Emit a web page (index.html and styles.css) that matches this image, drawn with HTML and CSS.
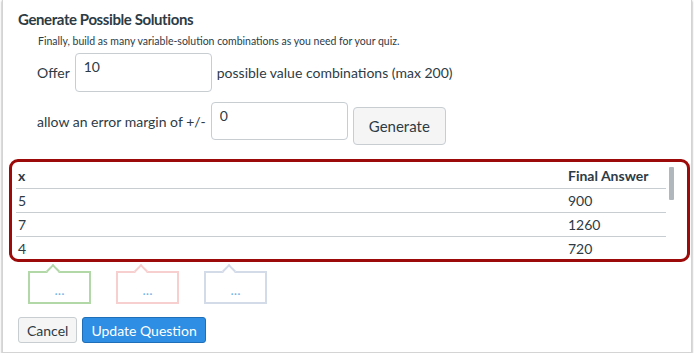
FILE: index.html
```html
<!DOCTYPE html>
<html lang="en">
<head>
    <meta charset="UTF-8">
    <title>Generate Possible Solutions</title>
    <link rel="stylesheet" href="styles.css">
</head>
<body>
    <div class="panel">
        <h2 class="title">Generate Possible Solutions</h2>
        <p class="hint">Finally, build as many variable-solution combinations as you need for your quiz.</p>

        <div class="form-row">
            <span class="label">Offer</span>
            <input class="field" type="text" value="10">
            <span class="label">possible value combinations (max 200)</span>
        </div>

        <div class="form-row second">
            <span class="label">allow an error margin of +/-</span>
            <input class="field" type="text" value="0">
            <button class="btn">Generate</button>
        </div>

        <div class="highlight">
            <div class="table-wrap">
                <table>
                    <thead>
                        <tr><th>x</th><th class="answer">Final Answer</th></tr>
                    </thead>
                    <tbody>
                        <tr><td>5</td><td class="answer">900</td></tr>
                        <tr><td>7</td><td class="answer">1260</td></tr>
                        <tr><td>4</td><td class="answer">720</td></tr>
                    </tbody>
                </table>
                <div class="scrollbar"></div>
            </div>
        </div>

        <div class="callouts">
            <div class="callout green">...</div>
            <div class="callout pink">...</div>
            <div class="callout blue">...</div>
        </div>

        <div class="actions">
            <button class="btn small">Cancel</button>
            <button class="btn small primary">Update Question</button>
        </div>
    </div>
</body>
</html>
```

FILE: styles.css
```css
body {
    margin: 0;
    background: #fff;
    font-family: Lato, 'Liberation Sans', sans-serif;
    color: #2d3b45;
}

.panel {
    margin: 0 2px;
    height: 353px;
    box-sizing: border-box;
    border: 1px solid #d4d4d4;
    border-top: 0;
    box-shadow: 0 1px 2px rgba(0,0,0,0.45);
    padding: 8px 0 0 0;
}

.title {
    margin: 0 0 0 15px;
    font-size: 15px;
    letter-spacing: -0.4px;
    font-weight: 700;
    line-height: 22px;
}

.hint {
    margin: 4px 0 0 35px;
    font-size: 10.5px;
    line-height: 14px;
}

.form-row {
    display: flex;
    align-items: flex-start;
    gap: 5px;
    margin: 5px 0 0 34px;
    font-size: 14px;
}

.form-row.second {
    margin-top: 9px;
}

.label {
    line-height: 40px;
}

.field {
    width: 137px;
    height: 39px;
    box-sizing: border-box;
    border: 1px solid #c7cdd1;
    border-radius: 4px;
    padding: 0 8px 12px;
    font-family: inherit;
    font-size: 14px;
    color: #2d3b45;
}

.second .field {
    height: 38px;
}

.btn {
    font-family: inherit;
    font-size: 15px;
    color: #2d3b45;
    background: #f5f5f5;
    border: 1px solid #c7cdd1;
    border-radius: 4px;
    height: 38px;
    padding: 0 15px;
    margin-top: 5px;
}

.highlight {
    margin: 14px 1px 0 6px;
    border: 3px solid #9c0a0a;
    border-radius: 9px;
    padding: 1px 13px 0 4px;
    box-sizing: border-box;
    height: 103px;
    overflow: hidden;
}

.table-wrap {
    display: flex;
    gap: 3px;
}

table {
    flex: 1;
    border-collapse: collapse;
    font-size: 14px;
}

th, td {
    text-align: left;
    padding: 0 2px;
    height: 23px;
    border-bottom: 1px solid #c7cdd1;
}

th {
    font-weight: 700;
    height: 25px;
}

td {
    font-weight: 400;
}

tbody tr:last-child td {
    border-bottom: 0;
}

.answer {
    width: 96px;
}

.scrollbar {
    width: 5px;
    height: 33px;
    margin-top: 4px;
    background: #b1b8bd;
    border-radius: 1px;
}

.callouts {
    display: flex;
    gap: 25px;
    margin: 9px 0 0 25px;
}

.callout {
    position: relative;
    width: 63px;
    height: 33px;
    box-sizing: border-box;
    border: 2px solid;
    background: #fff;
    color: #74b5e8;
    font-size: 14px;
    text-align: center;
    line-height: 34px;
}

.callout::before {
    content: "";
    position: absolute;
    top: -7px;
    left: 18px;
    width: 8px;
    height: 8px;
    background: #fff;
    border-top: 2px solid;
    border-left: 2px solid;
    border-color: inherit;
    transform: rotate(45deg);
}

.green { border-color: #b2d8a8; }
.pink { border-color: #f7cfcf; }
.blue { border-color: #d3dbe9; }

.actions {
    display: flex;
    gap: 5px;
    margin: 13px 0 0 15px;
}

.btn.small {
    font-size: 14px;
    height: 26px;
    padding: 0 8px;
    margin: 0;
    border-radius: 3px;
}

.btn.primary {
    background: #2d8ee3;
    border-color: #1f6fb8;
    color: #fff;
}
```
